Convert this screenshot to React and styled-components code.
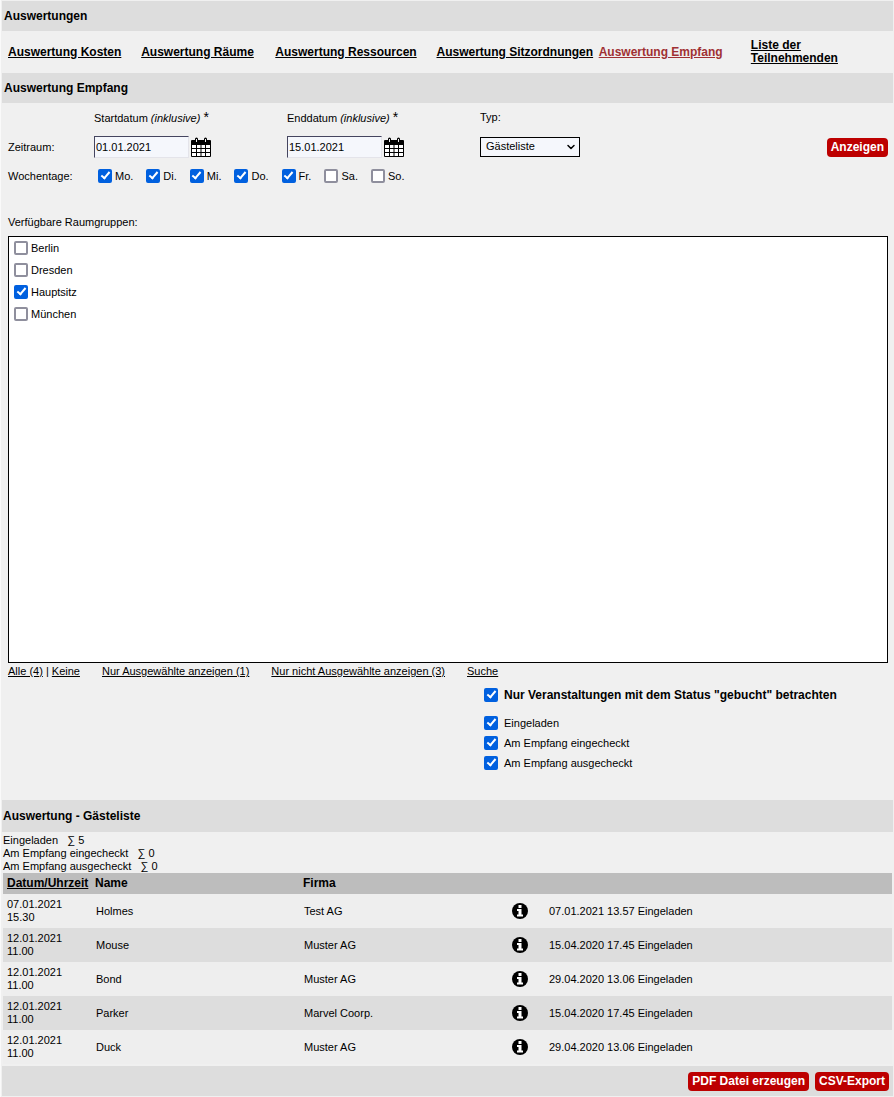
import { useState } from "react";
import styled, { createGlobalStyle } from "styled-components";
import { LuChevronDown } from "react-icons/lu";

const GlobalStyle = createGlobalStyle`
    * {
        box-sizing: border-box;
    }
    body {
        margin: 0;
        background: #f0f0f0;
        color: #000;
        font-family: "Liberation Sans", Arial, sans-serif;
        font-size: 11px;
        line-height: 13px;
    }
    input, select, button {
        font-family: inherit;
        color: inherit;
        margin: 0;
    }
`
const Page = styled.div`
    border-left: 1px solid #fafafa;
    padding: 1px;
`
const TitleBar = styled.h2`
    display: flex;
    align-items: center;
    height: ${({ $tall }) => ($tall ? "32px" : "30px")};
    margin: 0;
    padding-left: ${({ $tall }) => ($tall ? "1px" : "2px")};
    background: #dddddd;
    font-size: 12px;
    font-weight: bold;
`
const Nav = styled.nav`
    display: grid;
    grid-template-columns: 133fr 134fr 161fr 162fr 152fr 142fr;
    align-items: center;
    height: 42px;
    padding-left: 6px;
`
const NavLink = styled.a`
    justify-self: start;
    color: ${({ $active }) => ($active ? "#a03033" : "#000")};
    font-size: 12px;
    font-weight: bold;
`
const Form = styled.form`
    padding: 0 5px 0 6px;
`
const Fields = styled.div`
    display: grid;
    grid-template-columns: 86px 193px 193px 1fr auto;
    grid-template-rows: 29px 30px 28px;
    align-items: center;
`
const FieldLabel = styled.label`
    grid-column: ${({ $column }) => $column};
`
const Star = styled.span`
    font-size: 14px;
`
const RowLabel = styled.span`
    grid-column: 1;
`
const DateField = styled.div`
    display: flex;
    align-items: center;
    gap: 2px;
`
const DateInput = styled.input`
    width: 95px;
    height: 22px;
    padding: 0 1px;
    border: 1px solid;
    border-color: #45455f #e4e4ea #e4e4ea #45455f;
    background: #f5f7fc;
    font-size: 11px;
`
const IconButton = styled.button`
    display: block;
    padding: 0;
    border: none;
    background: none;
    cursor: pointer;

    svg {
        display: block;
    }
`
const SelectBox = styled.div`
    display: grid;
    align-items: center;
    width: 100px;

    select, svg {
        grid-area: 1 / 1;
    }
    svg {
        justify-self: end;
        margin-right: 3px;
        pointer-events: none;
    }
`
const Select = styled.select`
    appearance: none;
    width: 100%;
    height: 20px;
    padding: 0 16px 2px 5px;
    border: 1px solid #000;
    border-radius: 0;
    background: #f5f7fc;
    font-size: 11px;
`
const RedButton = styled.button`
    height: 19px;
    padding: 0 4px;
    border: none;
    border-radius: 4px;
    background: #bd0000;
    color: #fff;
    font-size: 12px;
    font-weight: bold;
    cursor: pointer;
`
const Weekdays = styled.div`
    grid-column: 2 / -1;
    display: flex;
    gap: 13px;
    padding-left: 4px;
`
const CheckLabel = styled.label`
    display: flex;
    align-items: center;
    gap: ${({ $gap }) => $gap || "3px"};
    font-size: ${({ $bold }) => ($bold ? "12px" : "11px")};
    font-weight: ${({ $bold }) => ($bold ? "bold" : "normal")};
`
const CheckInput = styled.input`
    appearance: none;
    display: flex;
    justify-content: center;
    align-items: flex-start;
    flex: none;
    width: 14px;
    height: 14px;
    border: 2px solid #8f8f9d;
    border-radius: 2px;
    background: #fff;

    &:checked {
        border-color: #0060df;
        background: #0060df;
    }
    &:checked::after {
        content: "";
        box-sizing: border-box;
        width: 5px;
        height: 9px;
        border: solid #fff;
        border-width: 0 2px 2px 0;
        transform: translateY(-1px) rotate(40deg);
    }
`
const GroupsTitle = styled.div`
    padding: 26px 0 7px;
`
const GroupsBox = styled.div`
    height: 427px;
    padding: 0 5px;
    border: 1px solid #000;
    background: #fff;
    overflow: auto;

    label {
        height: 22px;
    }
`
const GroupLinks = styled.div`
    display: flex;
    gap: 22px;
    padding-top: 2px;

    a {
        color: #000;
    }
`
const StatusFilter = styled.div`
    display: flex;
    flex-direction: column;
    margin-left: 476px;
    padding: 7px 0 27px;

    label {
        height: 20px;
    }
    label:first-child {
        margin-bottom: 8px;
    }
`
const Totals = styled.div`
    padding: 2px 0 0 1px;
    white-space: pre;
`
const TableWrap = styled.div`
    padding: 0 1px 2px;
`
const GuestTable = styled.table`
    width: 100%;
    table-layout: fixed;
    border-collapse: collapse;
`
const HeadCell = styled.th`
    width: ${({ $width }) => $width || "auto"};
    height: 21px;
    padding: 0 4px;
    background: #bdbdbd;
    font-size: 12px;
    text-align: left;
    white-space: nowrap;

    a {
        color: #000;
    }
`
const GuestRow = styled.tr`
    background: #eeeeee;

    &:nth-child(even) {
        background: #dddddd;
    }
`
const Cell = styled.td`
    height: 34px;
    padding: 0 4px;

    & + & {
        padding-left: 5px;
    }
    svg {
        display: block;
    }
`
const Footer = styled.footer`
    display: flex;
    justify-content: flex-end;
    align-items: center;
    gap: 6px;
    height: 30px;
    padding-right: 4px;
    background: #dddddd;
`

const links = ["Auswertung Kosten", "Auswertung Räume", "Auswertung Ressourcen", "Auswertung Sitzordnungen", "Auswertung Empfang"];
const days = ["Mo.", "Di.", "Mi.", "Do.", "Fr.", "Sa.", "So."];
const groups = ["Berlin", "Dresden", "Hauptsitz", "München"];
const totals = [["Eingeladen", 5], ["Am Empfang eingecheckt", 0], ["Am Empfang ausgecheckt", 0]];
const guests = [
    { date: "07.01.2021", time: "15.30", name: "Holmes", company: "Test AG", status: "07.01.2021 13.57 Eingeladen" },
    { date: "12.01.2021", time: "11.00", name: "Mouse", company: "Muster AG", status: "15.04.2020 17.45 Eingeladen" },
    { date: "12.01.2021", time: "11.00", name: "Bond", company: "Muster AG", status: "29.04.2020 13.06 Eingeladen" },
    { date: "12.01.2021", time: "11.00", name: "Parker", company: "Marvel Coorp.", status: "15.04.2020 17.45 Eingeladen" },
    { date: "12.01.2021", time: "11.00", name: "Duck", company: "Muster AG", status: "29.04.2020 13.06 Eingeladen" },
];

function Check({ label, checked, gap, bold }) {
    return (
        <CheckLabel $gap={gap} $bold={bold}>
            <CheckInput type="checkbox" defaultChecked={checked} />
            {label}
        </CheckLabel>
    )
}

function CalendarIcon() {
    return (
        <svg width="20" height="20" viewBox="0 0 20 20" aria-hidden="true">
            <path d="M1 3h18a1 1 0 0 1 1 1v15a1 1 0 0 1-1 1H1a1 1 0 0 1-1-1V4a1 1 0 0 1 1-1z" fill="#000" />
            <path d="M4 5V2a1.500 1.500 0 0 1 3 0v3zM13 5V2a1.500 1.500 0 0 1 3 0v3z" fill="#000" />
            <path d="M5 2h1v3H5zM14 2h1v3h-1z" fill="#f0f0f0" />
            <path
                d="M1 8h4v3H1zM6 8h3.500v3H6zM10.500 8H14v3h-3.500zM15 8h4v3h-4zM1 12h4v3H1zM6 12h3.500v3H6zM10.500 12H14v3h-3.500zM15 12h4v3h-4zM1 16h4v3H1zM6 16h3.500v3H6zM10.500 16H14v3h-3.500zM15 16h4v3h-4z"
                fill="#fff"
            />
        </svg>
    )
}

function InfoIcon() {
    return (
        <svg width="16" height="16" viewBox="0 0 16 16" role="img" aria-label="Info">
            <circle cx="8" cy="8" r="8" fill="#000" />
            <path d="M6.500 2h3v3h-3zM5 6h4.500v5.500H11V13.500H5v-2h1.500V8H5z" fill="#fff" />
        </svg>
    )
}

function DatePicker({ id, value, onChange }) {
    return (
        <DateField>
            <DateInput id={id} type="text" value={value} onChange={(e) => onChange(e.target.value)} />
            <IconButton type="button" aria-label="Kalender öffnen"><CalendarIcon /></IconButton>
        </DateField>
    )
}

function App() {
    const [start, setStart] = useState("01.01.2021");
    const [end, setEnd] = useState("15.01.2021");

    return (
        <Page>
            <GlobalStyle />
            <TitleBar>Auswertungen</TitleBar>
            <Nav>
                {links.map((link, i) => (
                    <NavLink href="#" key={link} $active={i === 4}>{link}</NavLink>
                ))}
                <NavLink href="#">Liste der<br />Teilnehmenden</NavLink>
            </Nav>
            <TitleBar>Auswertung Empfang</TitleBar>
            <Form onSubmit={(e) => e.preventDefault()}>
                <Fields>
                    <FieldLabel htmlFor="start" $column={2}>Startdatum <i>(inklusive)</i> <Star>*</Star></FieldLabel>
                    <FieldLabel htmlFor="end" $column={3}>Enddatum <i>(inklusive)</i> <Star>*</Star></FieldLabel>
                    <FieldLabel htmlFor="type" $column="4 / -1">Typ:</FieldLabel>
                    <RowLabel>Zeitraum:</RowLabel>
                    <DatePicker id="start" value={start} onChange={setStart} />
                    <DatePicker id="end" value={end} onChange={setEnd} />
                    <SelectBox>
                        <Select id="type" defaultValue="Gästeliste">
                            <option>Gästeliste</option>
                        </Select>
                        <LuChevronDown size={12} strokeWidth={3} />
                    </SelectBox>
                    <RedButton type="submit">Anzeigen</RedButton>
                    <RowLabel>Wochentage:</RowLabel>
                    <Weekdays>
                        {days.map((day, i) => <Check key={day} label={day} checked={i < 5} />)}
                    </Weekdays>
                </Fields>
                <GroupsTitle>Verfügbare Raumgruppen:</GroupsTitle>
                <GroupsBox>
                    {groups.map((group) => <Check key={group} label={group} checked={group === "Hauptsitz"} />)}
                </GroupsBox>
                <GroupLinks>
                    <span><a href="#">Alle (4)</a> | <a href="#">Keine</a></span>
                    <a href="#">Nur Ausgewählte anzeigen (1)</a>
                    <a href="#">Nur nicht Ausgewählte anzeigen (3)</a>
                    <a href="#">Suche</a>
                </GroupLinks>
                <StatusFilter>
                    <Check label={'Nur Veranstaltungen mit dem Status "gebucht" betrachten'} gap="6px" checked bold />
                    {totals.map(([label]) => <Check key={label} label={label} gap="6px" checked />)}
                </StatusFilter>
            </Form>
            <TitleBar $tall>Auswertung - Gästeliste</TitleBar>
            <Totals>
                {totals.map(([label, sum]) => <div key={label}>{label}{"   ∑ "}{sum}</div>)}
            </Totals>
            <TableWrap>
                <GuestTable>
                    <thead>
                        <tr>
                            <HeadCell $width="88px"><a href="#">Datum/Uhrzeit</a></HeadCell>
                            <HeadCell $width="208px">Name</HeadCell>
                            <HeadCell $width="208px">Firma</HeadCell>
                            <HeadCell $width="37px" />
                            <HeadCell />
                        </tr>
                    </thead>
                    <tbody>
                        {guests.map((guest) => (
                            <GuestRow key={guest.name}>
                                <Cell>{guest.date}<br />{guest.time}</Cell>
                                <Cell>{guest.name}</Cell>
                                <Cell>{guest.company}</Cell>
                                <Cell><InfoIcon /></Cell>
                                <Cell>{guest.status}</Cell>
                            </GuestRow>
                        ))}
                    </tbody>
                </GuestTable>
            </TableWrap>
            <Footer>
                <RedButton type="button">PDF Datei erzeugen</RedButton>
                <RedButton type="button">CSV-Export</RedButton>
            </Footer>
        </Page>
    )
}

export default App
